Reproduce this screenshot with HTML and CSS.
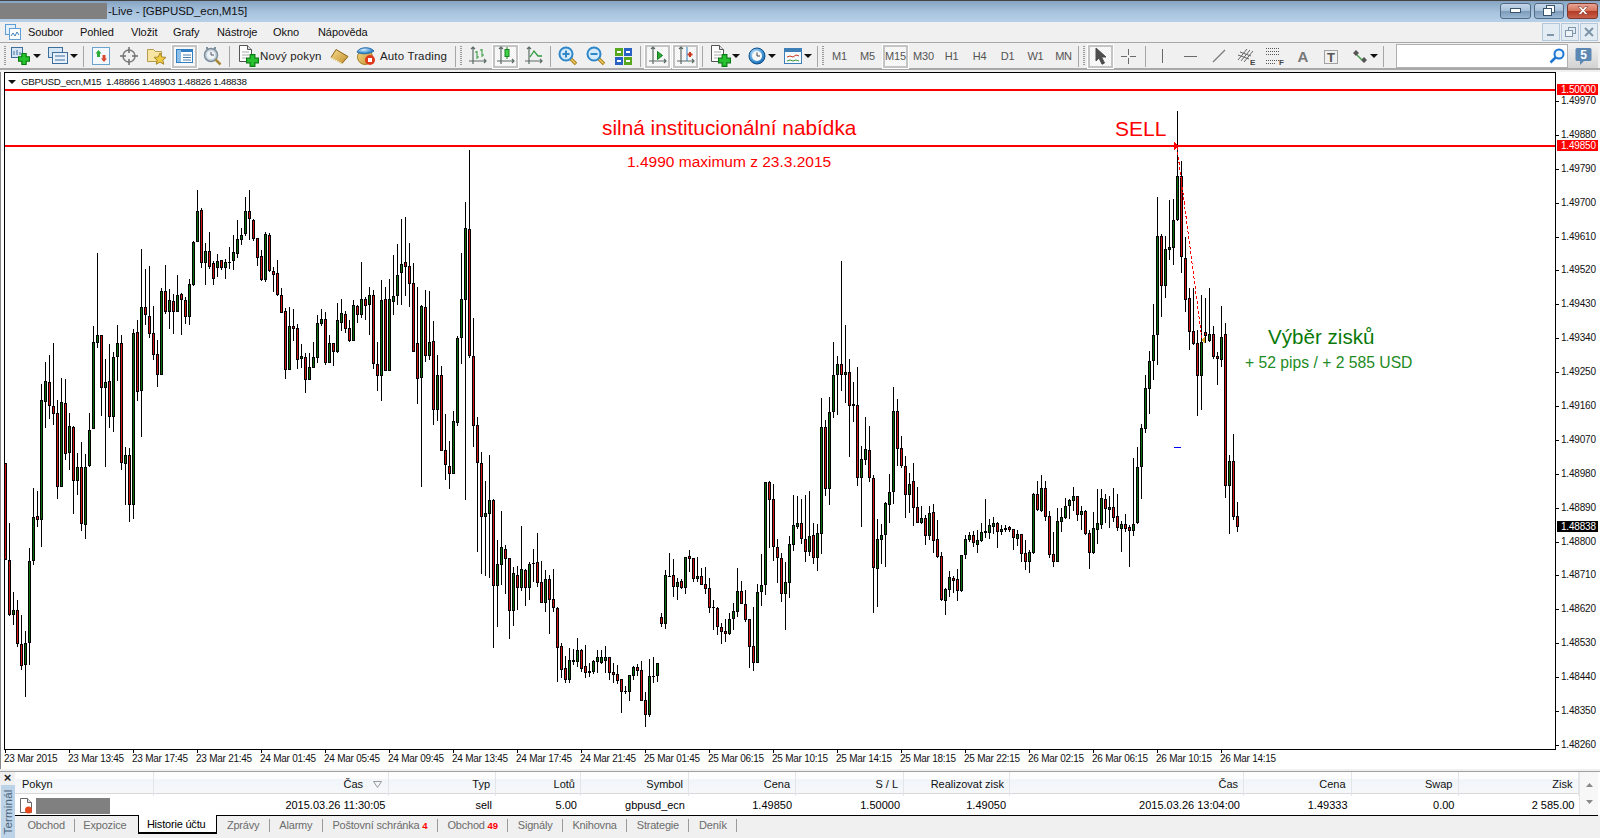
FILE: index.html
```html
<!DOCTYPE html>
<html lang="cs">
<head>
<meta charset="utf-8">
<title>GBPUSD_ecn,M15</title>
<link rel="stylesheet" href="styles.css">
</head>
<body>
<svg class="defs" width="0" height="0">
  <defs>
    <linearGradient id="gBlue" x1="0" y1="0" x2="0" y2="1"><stop offset="0" stop-color="#e8f2fb"/><stop offset="1" stop-color="#a9cbe8"/></linearGradient>
    <linearGradient id="gGold" x1="0" y1="0" x2="1" y2="1"><stop offset="0" stop-color="#f6dc8c"/><stop offset="1" stop-color="#c48f2c"/></linearGradient>
    <radialGradient id="gBall" cx=".4" cy=".35" r=".8"><stop offset="0" stop-color="#d9f0ff"/><stop offset=".6" stop-color="#3b8fd0"/><stop offset="1" stop-color="#0c4f94"/></radialGradient>
    <symbol id="plus" viewBox="0 0 11 11"><path d="M3.5.5h4v3h3v4h-3v3h-4v-3h-3v-4h3z" fill="#27c22d" stroke="#0a7a12"/></symbol>
    <symbol id="axes" viewBox="0 0 20 20"><path d="M5 1v17M1 15h17M3 3l2-2 2 2M16 13l2 2-2 2" fill="none" stroke="#5c6b66" stroke-width="1.2"/></symbol>
    <symbol id="doc" viewBox="0 0 15 18"><path d="M1.500 .5h8l4 4v12h-12z" fill="#fff" stroke="#555"/><path d="M9.500 .5v4h4" fill="#ddd" stroke="#555"/><path d="M4 7h7M4 10h7M4 13h4" stroke="#aaa"/></symbol>
    <symbol id="lens" viewBox="0 0 20 20"><path d="M12 12l6 6" stroke="#a87a14" stroke-width="3.400"/><path d="M12.500 12.500l5 5" stroke="#f2cf62" stroke-width="1.400"/><circle cx="8" cy="8" r="6.500" fill="#d5ebfb" stroke="#2e87c9" stroke-width="2"/></symbol>
  </defs>
</svg>

<header class="titlebar">
  <span class="redact redact-title"></span>
  <span class="title-text">-Live - [GBPUSD_ecn,M15]</span>
  <span class="winbtns">
    <span class="winbtn"><svg width="14" height="8"><rect x="1.500" y="1.500" width="10" height="4" fill="#fff" stroke="#39536b"/></svg></span>
    <span class="winbtn winbtn-mid"><svg width="14" height="11"><rect x="4.500" y=".5" width="8" height="7" fill="#fff" stroke="#39536b"/><rect x="1.500" y="3.500" width="8" height="7" fill="#fff" stroke="#39536b"/></svg></span>
    <span class="winbtn winbtn-close"><svg width="16" height="11"><path d="M3 1.500l3 0 2 2.500 2-2.500 3 0-3.500 4 3.500 4h-3l-2-2.500-2 2.500h-3l3.500-4z" fill="#fff" stroke="#7a2c20" stroke-width=".6"/></svg></span>
  </span>
</header>

<nav class="menubar">
  <svg class="appicon" width="16" height="16"><rect x=".5" y=".5" width="10" height="10" fill="#e4f0fb" stroke="#5f9fd6"/><rect x="4.500" y="4.500" width="11" height="11" fill="#fff" stroke="#5f9fd6"/><path d="M6 12l2-3 2 3 2-4 2 3" fill="none" stroke="#3f7fb8"/></svg>
  <span class="menuitem">Soubor</span><span class="menuitem">Pohled</span><span class="menuitem">Vložit</span><span class="menuitem">Grafy</span><span class="menuitem">Nástroje</span><span class="menuitem">Okno</span><span class="menuitem">Nápověda</span>
  <span class="mdibtns">
    <span class="mdibtn"><svg width="10" height="10"><rect x="1" y="7" width="7" height="2" fill="#7f95aa"/></svg></span>
    <span class="mdibtn"><svg width="11" height="11"><rect x="3.500" y=".5" width="7" height="6" fill="none" stroke="#7f95aa"/><rect x=".5" y="3.500" width="7" height="6" fill="#eef3f8" stroke="#7f95aa"/></svg></span>
    <span class="mdibtn"><svg width="10" height="10"><path d="M1 1l8 8M9 1l-8 8" stroke="#7f95aa" stroke-width="2"/></svg></span>
  </span>
</nav>

<div class="toolbar">
  <i class="grip"></i>
  <span class="tb tb-new"><svg width="19" height="18"><rect x=".5" y=".5" width="11" height="10" fill="#d6e6f5" stroke="#3d6f9c"/><path d="M3 8V4M6 8V3M9 8V5" stroke="#3d6f9c"/><use href="#plus" x="7" y="6" width="12" height="12"/></svg><i class="caret"></i></span>
  <span class="tb tb-prof"><svg width="20" height="18"><rect x=".5" y=".5" width="14" height="10" fill="#d6e6f5" stroke="#3d6f9c"/><rect x="4.500" y="5.500" width="15" height="11" fill="#e8f1fa" stroke="#3d6f9c"/><path d="M7 9h10M7 13h10" stroke="#3d6f9c"/></svg><i class="caret"></i></span>
  <i class="sep"></i>
  <span class="tb"><svg width="18" height="18"><rect x=".5" y=".5" width="17" height="17" fill="#f3f8fc" stroke="#6ba3cf"/><path d="M6.500 3l3 3.500H8V10H5V6.500H3.500z" fill="#2cab36"/><path d="M12 15l-3-3.500h1.500V8h3v3.500H15z" fill="#d9482f"/></svg></span>
  <span class="tb"><svg width="20" height="20"><circle cx="10" cy="10" r="6" fill="none" stroke="#7d7d7d" stroke-width="1.500"/><path d="M10 1v6M10 13v6M1 10h6M13 10h6" stroke="#6e6e6e" stroke-width="1.500"/></svg></span>
  <span class="tb"><svg width="21" height="20"><path d="M1.500 3.500h6l2 2h6v10h-14z" fill="#f7e6a2" stroke="#b59a4c"/><path d="M14 7l1.800 4 4.200.4-3.200 2.700 1 4.200-3.800-2.300-3.800 2.300 1-4.200-3.200-2.700 4.200-.4z" fill="#f0cb3e" stroke="#a8892a"/></svg></span>
  <span class="tb tb-on"><svg width="17" height="14"><rect x=".5" y=".5" width="16" height="13" fill="#fff" stroke="#2f7fc4"/><rect x="1" y="1" width="4" height="12" fill="#8cbde6"/><rect x="5" y="1" width="11" height="2" fill="#2f7fc4"/><path d="M7 6h8M7 8.500h8M7 11h8" stroke="#4a7fae"/></svg></span>
  <span class="tb"><svg width="20" height="20"><circle cx="8" cy="9" r="6.500" fill="#c9d4dc" stroke="#7b8d9b" stroke-width="1.500"/><circle cx="8" cy="9" r="4" fill="#eef3f6"/><path d="M8 6v3h3" fill="none" stroke="#556"/><path d="M4 1v2M12 1v2" stroke="#7b8d9b" stroke-width="2"/><path d="M12.500 13.500l5 5" stroke="#a88a3a" stroke-width="2.500"/></svg></span>
  <i class="sep"></i>
  <span class="tb tb-text tb-order"><svg width="21" height="22"><use href="#doc" x="0" y="0" width="15" height="18"/><use href="#plus" x="8" y="9" width="13" height="13"/></svg><b class="tb-label">Nový pokyn</b></span>
  <span class="tb"><svg width="19" height="15"><path d="M6 .5l12 7-6 7-11-6z" fill="url(#gGold)" stroke="#8a6418"/><path d="M1 8.500l11 6" stroke="#fff3c4"/></svg></span>
  <span class="tb tb-text tb-auto"><svg width="20" height="20"><circle cx="9" cy="11" r="7.500" fill="url(#gGold)" stroke="#a57e22"/><path d="M1 6c2-5 13-6 17-1-4 3-13 4-17 1z" fill="url(#gBall)" stroke="#2d6ea8"/><circle cx="14" cy="14" r="5" fill="#e03a1c"/><rect x="12" y="12" width="4" height="4" fill="#fff"/></svg><b class="tb-label">Auto Trading</b></span>
  <i class="sep"></i>
  <i class="grip"></i>
  <span class="tb"><svg width="20" height="20"><use href="#axes"/><path d="M9 5v8M7 6h2M9 11h2M14 3v8M12 4h2M14 9h2" stroke="#2e9a3a" fill="none"/></svg></span>
  <span class="tb tb-on"><svg width="20" height="20"><use href="#axes"/><path d="M11 1v12" stroke="#16861f"/><rect x="9" y="3.500" width="4" height="7" fill="#3ed049" stroke="#16861f"/></svg></span>
  <span class="tb"><svg width="20" height="20"><use href="#axes"/><path d="M6 11l4-6 4 5h4" fill="none" stroke="#2e9a3a" stroke-width="1.300"/></svg></span>
  <i class="sep"></i>
  <span class="tb"><svg width="20" height="20"><use href="#lens"/><path d="M8 4.500v7M4.500 8h7" stroke="#2e87c9" stroke-width="2"/></svg></span>
  <span class="tb"><svg width="20" height="20"><use href="#lens"/><path d="M4.500 8h7" stroke="#2e87c9" stroke-width="2"/></svg></span>
  <span class="tb"><svg width="17" height="17"><rect width="8" height="8" fill="#59a71e"/><rect x="9" width="8" height="8" fill="#2a62c4"/><rect y="9" width="8" height="8" fill="#2a62c4"/><rect x="9" y="9" width="8" height="8" fill="#59a71e"/><path d="M2 4h4M11 4h4M2 13h4M11 13h4" stroke="#fff" stroke-width="2"/></svg></span>
  <i class="sep"></i>
  <span class="tb tb-on"><svg width="20" height="20"><use href="#axes"/><path d="M9.500 5.500l5 4-5 4z" fill="#2cab36" stroke="#137a1d"/></svg></span>
  <span class="tb tb-on"><svg width="20" height="20"><use href="#axes"/><path d="M11 1v14" stroke="#2f7fc4"/><path d="M14 6v5M11.500 8.500h5" stroke="#c83a1e" stroke-width="2"/></svg></span>
  <i class="sep"></i>
  <span class="tb tb-ind"><svg width="21" height="22"><use href="#doc" x="0" y="0" width="15" height="18"/><use href="#plus" x="8" y="9" width="13" height="13"/></svg><i class="caret"></i></span>
  <span class="tb tb-clock"><svg width="18" height="18"><circle cx="9" cy="9" r="8" fill="url(#gBall)" stroke="#0b4f8f"/><circle cx="9" cy="9" r="5" fill="#f5f7f8"/><path d="M9 5.500V9h3" fill="none" stroke="#444"/></svg><i class="caret"></i></span>
  <span class="tb tb-tpl"><svg width="18" height="16"><rect x=".5" y=".5" width="17" height="15" fill="#f5f9fd" stroke="#3f7fb8"/><rect x="1" y="1" width="16" height="3" fill="#3f7fb8"/><path d="M3 9l3-1 3 1 3-2 3 1" fill="none" stroke="#c83a1e"/><path d="M3 13l3-1 3 1 3-1 3 1" fill="none" stroke="#3a9a3a"/></svg><i class="caret"></i></span>
  <i class="sep"></i>
  <i class="grip"></i>
  <span class="tb tf">M1</span><span class="tb tf">M5</span><span class="tb tf tb-on">M15</span><span class="tb tf">M30</span><span class="tb tf">H1</span><span class="tb tf">H4</span><span class="tb tf">D1</span><span class="tb tf">W1</span><span class="tb tf">MN</span>
  <i class="sep sep-tight"></i>
  <i class="grip"></i>
  <span class="tb tb-on"><svg width="14" height="18"><path d="M2 1l10 9H7.500l3 6-2.500 1.200-3-6.200L2 14z" fill="#4d4d4d" stroke="#4d4d4d"/></svg></span>
  <span class="tb"><svg width="17" height="17"><path d="M8.500 1v6M8.500 10v6M1 8.500h6M10 8.500h6" stroke="#6a6a6a"/></svg></span>
  <i class="sep"></i>
  <span class="tb"><svg width="3" height="14"><path d="M1.500 0v14" stroke="#6a6a6a"/></svg></span>
  <span class="tb"><svg width="13" height="3"><path d="M0 1.500h13" stroke="#6a6a6a"/></svg></span>
  <span class="tb"><svg width="14" height="14"><path d="M1 13L13 1" stroke="#7a7a7a" stroke-width="1.200"/></svg></span>
  <span class="tb"><svg width="20" height="21"><path d="M1 14L10 3M4 15L13 4M7 16L16 5M1 9l11 4M3 6l11 4" stroke="#666" fill="none"/><text class="ico-letter" x="13" y="19">E</text></svg></span>
  <span class="tb"><svg width="20" height="21"><path d="M1 2.500h14M1 5.500h14M1 8.500h14M1 14.500h14M1 17.500h10" stroke="#555" stroke-dasharray="1 1" fill="none"/><text class="ico-letter" x="14" y="19">F</text></svg></span>
  <span class="tb"><svg width="14" height="16"><text class="ico-a" x="7" y="14">A</text></svg></span>
  <span class="tb"><svg width="16" height="17"><rect x="1.500" y="2.500" width="13" height="13" fill="none" stroke="#555" stroke-dasharray="1 1"/><text class="ico-t" x="8" y="14">T</text></svg></span>
  <span class="tb tb-arrows"><svg width="16" height="15"><path d="M4 1l3 3-3 3-3-3zM12 8l3 3-3 3-3-3z" fill="#555"/><path d="M5 6l5 5" stroke="#4a9a4a" stroke-width="1.500"/></svg><i class="caret"></i></span>
  <i class="sep"></i>
  <div class="search">
    <span class="searchbox"><svg width="16" height="16"><circle cx="10" cy="6" r="4.500" fill="#eaf5ff" stroke="#1c76d2" stroke-width="2"/><path d="M6.500 9.500L1.500 14.500" stroke="#1c76d2" stroke-width="2.500"/></svg></span>
    <span class="notif"><svg width="17" height="19"><path d="M2 1h13a1.500 1.500 0 0 1 1.500 1.500v10a1.500 1.500 0 0 1-1.500 1.500H9l-4 4v-4H2A1.500 1.500 0 0 1 .5 12.500v-10A1.500 1.500 0 0 1 2 1z" fill="#5c88b3"/><text class="ico-five" x="8.500" y="12">5</text></svg></span>
  </div>
</div>

<main class="workspace">
  <div class="chart-col">
    <div class="chart" id="chart">
      <svg class="candles" id="candles" width="1550" height="675" viewBox="5 73 1550 675"></svg>
      <div class="chart-head"><i class="head-tri"></i><span>GBPUSD_ecn,M15&nbsp;&nbsp;1.48866 1.48903 1.48826 1.48838</span></div>
      <i class="hline hline-a"></i>
      <i class="hline hline-b"></i>
      <span class="note note-main">silná institucionální nabídka</span>
      <span class="note note-sub">1.4990 maximum z 23.3.2015</span>
      <span class="note note-sell">SELL</span>
      <span class="note note-gain">Výběr zisků</span>
      <span class="note note-pips">+ 52 pips / + 2 585 USD</span>
    </div>
    <div class="timeaxis">
      <span class="tl">23 Mar 2015</span><span class="tl">23 Mar 13:45</span><span class="tl">23 Mar 17:45</span><span class="tl">23 Mar 21:45</span><span class="tl">24 Mar 01:45</span><span class="tl">24 Mar 05:45</span><span class="tl">24 Mar 09:45</span><span class="tl">24 Mar 13:45</span><span class="tl">24 Mar 17:45</span><span class="tl">24 Mar 21:45</span><span class="tl">25 Mar 01:45</span><span class="tl">25 Mar 06:15</span><span class="tl">25 Mar 10:15</span><span class="tl">25 Mar 14:15</span><span class="tl">25 Mar 18:15</span><span class="tl">25 Mar 22:15</span><span class="tl">26 Mar 02:15</span><span class="tl">26 Mar 06:15</span><span class="tl">26 Mar 10:15</span><span class="tl">26 Mar 14:15</span>
    </div>
  </div>
  <div class="priceaxis">
    <span class="pl">1.49970</span><span class="pl">1.49880</span><span class="pl">1.49790</span><span class="pl">1.49700</span><span class="pl">1.49610</span><span class="pl">1.49520</span><span class="pl">1.49430</span><span class="pl">1.49340</span><span class="pl">1.49250</span><span class="pl">1.49160</span><span class="pl">1.49070</span><span class="pl">1.48980</span><span class="pl">1.48890</span><span class="pl">1.48800</span><span class="pl">1.48710</span><span class="pl">1.48620</span><span class="pl">1.48530</span><span class="pl">1.48440</span><span class="pl">1.48350</span><span class="pl">1.48260</span>
    <span class="flag flag-a">1.50000</span>
    <span class="flag flag-b">1.49850</span>
    <span class="flag flag-c">1.48838</span>
  </div>
</main>

<section class="terminal">
  <aside class="term-side">
    <b class="term-close">×</b>
    <span class="term-label"><span class="term-rot">Terminál</span></span>
  </aside>
  <div class="term-main">
    <div class="term-table">
      <div class="grid grid-head">
        <span class="th th-left">Pokyn</span>
        <span class="th th-sort">Čas <svg class="sorticon" width="9" height="7"><path d="M.5.5h8l-4 6z" fill="none" stroke="#999"/></svg></span>
        <span class="th">Typ</span><span class="th">Lotů</span><span class="th">Symbol</span><span class="th">Cena</span><span class="th">S / L</span><span class="th">Realizovat zisk</span><span class="th">Čas</span><span class="th">Cena</span><span class="th">Swap</span><span class="th">Zisk</span>
      </div>
      <div class="grid grid-row">
        <span class="td td-left"><svg width="14" height="16"><path d="M1.500 .5h7l4 4v10h-11z" fill="#fff" stroke="#666"/><path d="M8.500 .5v4h4" fill="#ddd" stroke="#666"/><circle cx="9.500" cy="12" r="3.500" fill="#e2481c"/></svg><span class="redact redact-row"></span></span>
        <span class="td td-time">2015.03.26 11:30:05</span>
        <span class="td">sell</span><span class="td">5.00</span><span class="td">gbpusd_ecn</span><span class="td">1.49850</span><span class="td">1.50000</span><span class="td">1.49050</span><span class="td">2015.03.26 13:04:00</span><span class="td">1.49333</span><span class="td">0.00</span><span class="td">2 585.00</span>
      </div>
      <div class="scrollcol"><svg width="7" height="4"><path d="M0 4l3.500-4 3.500 4z" fill="#8a8a8a"/></svg><svg width="7" height="4"><path d="M0 0l3.500 4 3.500-4z" fill="#8a8a8a"/></svg></div>
    </div>
    <div class="tabs">
      <span class="tab tab-first">Obchod</span>
      <span class="tab tab-pre">Expozice</span>
      <span class="tab tab-active">Historie účtu</span>
      <span class="tab">Zprávy</span>
      <span class="tab">Alarmy</span>
      <span class="tab">Poštovní schránka <b class="badge">4</b></span>
      <span class="tab">Obchod <b class="badge">49</b></span>
      <span class="tab">Signály</span>
      <span class="tab">Knihovna</span>
      <span class="tab">Strategie</span>
      <span class="tab">Deník</span>
      <i class="tabs-fill"></i>
    </div>
  </div>
</section>
<script src="chart.js"></script>
</body>
</html>
```
FILE: styles.css
```css
*{box-sizing:border-box}
html,body{margin:0;padding:0}
body{width:1600px;height:838px;overflow:hidden;background:#f0f0f0;font-family:"Liberation Sans",Arial,sans-serif;font-size:11px;color:#000;display:flex;flex-direction:column}
.defs{position:absolute}
i{font-style:normal;display:block}
svg{display:block;flex:none}

/* title */
.titlebar{height:22px;flex:none;display:flex;align-items:center;background:linear-gradient(#86a4c2,#a9c4df 55%,#b7d0e8);border-top:1px solid #444;padding-bottom:2px}
.redact{background:#808080;display:block}
.redact-title{width:107px;height:16px}
.title-text{font-size:11.500px;letter-spacing:-.06px;color:#111;margin-left:1px}
.winbtns{margin-left:auto;display:flex;gap:3px;padding-right:2px}
.winbtn{width:31px;height:16px;border:1px solid #4f6b86;border-radius:3px;background:linear-gradient(#c4d7ea,#a7c1da 48%,#7d9cba 52%,#9ab7d3);display:flex;align-items:center;justify-content:center}
.winbtn-mid{width:30px}
.winbtn-close{background:linear-gradient(#e8a494,#d4735c 48%,#b33a24 52%,#c9604a);border-color:#7a3a2e}

/* menu */
.menubar{height:20px;flex:none;display:flex;align-items:center;background:#f0f0f0;padding-left:5px;position:relative}
.appicon{margin-right:7px}
.menuitem{font-size:11px;letter-spacing:-.08px;color:#111}
.menuitem:nth-of-type(1){width:52px}
.menuitem:nth-of-type(2){width:51px}
.menuitem:nth-of-type(3){width:42px}
.menuitem:nth-of-type(4){width:44px}
.menuitem:nth-of-type(5){width:56px}
.menuitem:nth-of-type(6){width:45px}
.mdibtns{margin-left:auto;display:flex;gap:1px;padding-right:2px}
.mdibtn{width:18px;height:18px;border:1px solid #b3c8dc;background:#e3ebf3;display:flex;align-items:center;justify-content:center}

/* toolbar */
.toolbar{height:28px;flex:none;display:flex;align-items:center;gap:3px;background:#f0f0f0;border-top:1px solid #a8a8a8;border-bottom:2px solid #a8a8a8;padding:1px 0 0 4px}
.grip{width:2px;height:20px;background:repeating-linear-gradient(#9a9a9a 0 1px,transparent 1px 2px)}
.sep{width:1px;height:21px;background:#a6a6a6;margin:0 1px}
.sep-tight{margin-left:-1px}
.tb{width:25px;height:23px;flex:none;display:flex;align-items:center;justify-content:center;border:1px solid transparent}
.tb-on{border:2px solid #c4c4c4;background-color:#f8f8f8;background-image:repeating-conic-gradient(#fff 0 25%,#f0f0f0 0 50%);background-size:2px 2px;outline:1px solid #fff}
.tb-new{width:32px;gap:3px;justify-content:flex-start;padding-left:1px}
.tb-prof{width:35px;gap:2px;justify-content:flex-start;padding-left:3px}
.tb-order{width:90px;justify-content:flex-start;padding-left:3px;gap:1px}
.tb-auto{width:96px;justify-content:flex-start;gap:4px}
.tb-ind{width:35px;gap:1px;justify-content:flex-start;padding-left:2px}
.tb-clock{width:33px;gap:2px;justify-content:flex-start;padding-left:2px}
.tb-tpl{width:32px;gap:2px;justify-content:flex-start;padding-left:2px}
.tb-arrows{width:33px;gap:2px;justify-content:flex-start;padding-left:5px}
.tb-label{font-weight:400;font-size:11.500px;color:#222;white-space:nowrap;letter-spacing:.15px}
.caret{width:0;height:0;border:4px solid transparent;border-top:4px solid #111;border-bottom:0;flex:none}
.tf{font-size:11px;color:#555;letter-spacing:-.2px}
.search{margin-left:auto;margin-right:2px;display:flex;height:24px}
.searchbox{width:172px;height:24px;background:#fff;border:1px solid #b0b0b0;display:flex;align-items:center;justify-content:flex-end;padding-right:2px}
.notif{width:30px;height:24px;background:linear-gradient(#f2f2f2,#d2d2d2);display:flex;align-items:center;justify-content:center}
.ico-letter{font:700 8px "Liberation Sans",sans-serif;fill:#444}
.ico-a{font:700 15px "Liberation Sans",sans-serif;fill:#777;text-anchor:middle}
.ico-t{font:700 13px "Liberation Sans",sans-serif;fill:#555;text-anchor:middle}
.ico-five{font:700 12px "Liberation Sans",sans-serif;fill:#fff;text-anchor:middle}

/* workspace */
.workspace{flex:none;height:697px;display:flex;background:#fff;margin-top:2px;position:relative;border-left:1px solid #888;}
.chart-col{width:1555px;flex:none;padding-left:3px;background:#fff}
.chart{width:1552px;height:678px;border:1px solid #000;background:#fff;position:relative;overflow:hidden}
.candles{position:absolute;left:0;top:0;shape-rendering:crispEdges}
.chart-head{position:absolute;left:3px;top:2px;display:flex;align-items:center;gap:5px;font-size:9.800px;line-height:13px;letter-spacing:-.3px;color:#111;white-space:nowrap}
.head-tri{width:0;height:0;border:4px solid transparent;border-top:4px solid #111;border-bottom:0}
.hline{position:absolute;left:0;right:0;height:2px;background:#f00}
.hline-a{top:16px}
.hline-b{top:72px}
.note{position:absolute;white-space:nowrap;line-height:24px}
.note-main{left:597px;top:43px;font-size:20.800px;color:#f00}
.note-sub{left:622px;top:77px;font-size:15.500px;color:#f00}
.note-sell{left:1110px;top:44px;font-size:21px;color:#f00}
.note-gain{left:1263px;top:252px;font-size:20.600px;color:#0a7a0a}
.note-pips{left:1240px;top:278px;font-size:15.700px;color:#238b23}
.timeaxis{height:18px;display:flex;background:#fff}
.tl{width:64px;flex:none;font-size:10px;line-height:12px;letter-spacing:-.25px;color:#111;white-space:nowrap;margin-top:0}
.tl::before{content:"";display:block;width:1px;height:3px;background:#000;margin-left:1px}
.priceaxis{flex:1;display:flex;flex-direction:column;padding-top:12px;position:relative;background:#fff}
.pl{height:33.900px;line-height:33.900px;font-size:10px;letter-spacing:-.2px;color:#111;padding-left:5px;position:relative;flex:none}
.pl::before{content:"";position:absolute;left:0;top:50%;width:3px;height:1px;background:#000}
.flag{position:absolute;left:1px;width:41px;height:11px;line-height:11px;font-size:10px;letter-spacing:-.2px;color:#fff;padding-left:4px}
.flag-a{top:12px;background:#f00}
.flag-b{top:68px;background:#f00}
.flag-c{top:449px;background:#000}

/* terminal */
.terminal{flex:1;display:flex;border-top:1px solid #a0a0a0;margin-top:2px;min-height:0}
.term-side{width:15px;flex:none;display:flex;flex-direction:column}
.term-close{height:13px;line-height:12px;text-align:center;font-size:13px;color:#222}
.term-label{flex:1;margin-left:1px;background:#bcd3e8;display:flex;align-items:center;justify-content:center}
.term-rot{transform:rotate(-90deg);font-size:11.500px;color:#4e6478;white-space:nowrap;letter-spacing:.2px}
.term-main{flex:1;display:flex;flex-direction:column;min-width:0}
.term-table{height:43px;flex:none;background:#fff;display:grid;grid-template-columns:1564px 1fr;grid-template-rows:22px 21px;position:relative}
.grid{display:grid;grid-template-columns:139px 235px 107px 85px 108px 107px 108px 106px 234px 107.500px 107px 120px;grid-column:1}
.grid-head{background:linear-gradient(#fdfdfd 0 35%,#f1f5fa 35%,#f6f8fb);border-bottom:1px solid #d8d8d8}
.th{font-size:11px;line-height:24px;text-align:right;padding-right:5px;border-right:1px solid #e2e6ea;color:#111;white-space:nowrap;display:block}
.th-left{text-align:left;padding-left:7px}
.th-sort{padding-right:5px;display:flex;justify-content:flex-end;align-items:center;gap:10px}
.sorticon{margin-right:1px}
.td{font-size:11px;line-height:23px;text-align:right;padding-right:4px;color:#000;white-space:nowrap}
.td-left{display:flex;align-items:center;gap:3px;padding-left:4px;text-align:left}
.td-time{padding-right:3.500px}
.redact-row{width:74px;height:16px}
.scrollcol{grid-column:2;grid-row:1/3;display:flex;flex-direction:column;justify-content:space-around;align-items:center;padding:4px 0;background:#f7f7f7;border-left:1px solid #e5e5e5;margin-right:2px;width:19px}
.tabs{flex:1;display:flex;align-items:flex-start;font-size:11px;letter-spacing:-.2px;color:#6c6c6c;background:#f0f0f0;border-top:0}
.tab{height:19px;line-height:18px;padding:0 10.500px 0 9.500px;border-top:1px solid #000;white-space:nowrap;position:relative}
.tab:not(.tab-active):not(.tab-pre)::after{content:"";position:absolute;right:0;top:3px;height:13px;width:1px;background:#9a9a9a}
.tab-first{padding-left:12.500px}
.tab-pre{padding-right:11.500px;padding-left:8px}
.tab-active{color:#000;background:#fff;border:1px solid #000;border-width:0 1.500px 2px 1px;padding:0 11px 0 8px;height:19px;line-height:19px}
.tabs-fill{flex:1;height:1px;background:#000;margin-right:2px}
.badge{color:#f00;font-size:9.500px}
```
FILE: chart.js
```js
// Candles: [high, low, bodyTop, bodyBottom, colour], measured per section of the chart.
var sections = [
 {y0:180,s:2.99,c:[
[845,1137,845,1135,'r'],[1025,1305,1136,1300,'r'],[1232,1332,1287,1300,'g'],[1255,1397,1285,1388,'r'],[1300,1465,1387,1453,'r'],[1348,1547,1384,1451,'g'],[1100,1451,1139,1385,'g'],[921,1150,1008,1140,'g'],[930,1038,1005,1017,'r'],[610,1098,658,1017,'g'],[545,743,601,664,'g'],[523,716,604,677,'r'],[488,734,676,700,'r'],[658,953,697,919,'r'],[592,919,664,919,'g'],[595,836,667,820,'r'],[697,866,736,817,'g'],[736,998,739,901,'r'],[815,941,858,901,'g'],[784,1048,858,1030,'r'],[818,1072,858,1032,'g'],[697,859,748,856,'g'],[436,746,485,746,'g'],[218,502,463,487,'g'],[462,705,463,623,'r'],[535,857,604,623,'g'],[490,741,601,710,'r'],[515,753,530,710,'g'],[434,602,488,530,'g'],[463,866,488,847,'r'],[798,971,822,850,'g'],[800,1023,822,973,'r'],[446,1015,458,973,'g'],[418,662,455,635,'r'],[207,768,380,632,'g'],[266,433,380,405,'r'],[258,472,407,460,'r'],[377,538,458,522,'r'],[478,620,521,584,'r'],[322,584,333,584,'g'],[254,400,333,396,'r'],[326,445,359,396,'g'],[340,460,362,396,'r'],[284,396,344,396,'g'],[338,463,340,360,'r'],[350,431,359,411,'r'],[296,433,312,411,'g'],[183,316,186,314,'g'],[30,184,94,184,'g'],[84,263,91,247,'r'],[188,314,213,247,'g'],[155,265,213,260,'r'],[243,314,249,295,'r'],[222,290,243,263,'g'],[238,268,240,263,'r'],[237,296,246,263,'g'],[200,265,246,247,'g'],[165,268,216,241,'g'],[120,232,177,220,'g'],[144,194,165,178,'g'],[51,167,94,160,'g'],[30,178,94,118,'r']]},
 {y0:145,s:3,c:[
[222,287,226,281,'r'],[280,363,280,338,'r'],[316,408,334,404,'r'],[262,410,268,404,'g'],[265,381,271,378,'r'],[366,441,379,389,'r'],[346,452,385,449,'r'],[430,503,451,503,'r'],[490,702,499,674,'r'],[487,674,544,674,'g'],[492,588,544,551,'r'],[538,671,550,644,'r'],[598,669,634,641,'g'],[623,744,637,704,'r'],[625,704,667,704,'g'],[591,668,637,668,'g'],[511,654,535,638,'g'],[492,543,523,536,'g'],[502,660,523,653,'r'],[571,653,595,653,'g'],[595,663,595,620,'r'],[475,623,526,621,'g'],[463,558,505,533,'g'],[499,563,508,551,'r'],[526,590,550,587,'r'],[465,587,481,587,'g'],[481,534,484,509,'r'],[351,520,463,509,'g'],[457,525,463,482,'r'],[427,570,451,479,'g'],[435,672,451,656,'r'],[591,738,658,692,'r'],[405,768,466,692,'g'],[427,678,463,677,'r'],[403,678,463,677,'g'],[331,510,454,470,'g'],[297,481,391,452,'g'],[222,480,358,383,'g'],[216,453,352,365,'r'],[294,486,364,416,'r'],[354,620,415,620,'r'],[427,777,595,701,'r'],[481,1026,484,698,'g'],[435,650,487,632,'r'],[438,645,592,632,'g'],[528,840,589,794,'r'],[630,828,691,794,'g'],[664,917,691,917,'r'],[808,1005,916,959,'r'],[889,1032,964,986,'r'],[799,986,829,986,'g'],[574,842,580,833,'g'],[324,657,463,578,'g'],[171,1065,250,464,'g'],[15,640,253,634,'r'],[520,906,634,842,'r'],[817,1221,841,953,'r'],[922,1287,955,1115,'r'],[1008,1293,1105,1115,'g'],[931,1299,1066,1106,'g'],[1063,1509,1066,1322,'r'],[1186,1446,1258,1322,'g']]},
 {y0:450,s:3,c:[
[184,405,292,345,'g'],[286,432,298,326,'r'],[325,567,325,482,'r'],[351,528,370,482,'g'],[349,480,376,413,'r'],[229,423,358,413,'g'],[358,468,361,413,'r'],[337,450,343,413,'g'],[298,397,340,341,'g'],[250,410,337,398,'r'],[334,458,397,458,'r'],[361,486,388,458,'g'],[376,552,388,449,'r'],[358,486,448,473,'r'],[472,696,475,593,'r'],[579,684,589,659,'r'],[618,699,655,689,'r'],[595,699,631,689,'g'],[596,644,631,636,'g'],[565,652,601,635,'g'],[597,666,601,656,'r'],[586,684,649,668,'r'],[640,681,664,668,'r'],[630,672,634,665,'g'],[601,669,622,635,'g'],[601,642,622,638,'g'],[589,668,622,632,'g'],[622,690,622,668,'r'],[640,699,667,674,'r'],[646,702,673,692,'r'],[688,789,688,725,'r'],[709,732,724,725,'g'],[676,753,676,725,'g'],[649,689,652,677,'g'],[643,678,652,662,'r'],[634,752,661,752,'r'],[727,831,751,794,'r'],[628,801,679,794,'g'],[621,699,677,680,'g'],[640,696,640,677,'g'],[490,530,502,521,'r'],[361,537,376,521,'g'],[310,382,377,378,'g'],[328,441,376,410,'r'],[385,450,397,410,'g'],[388,416,394,413,'r'],[322,431,322,413,'g'],[301,366,319,326,'r'],[325,395,325,386,'r'],[322,395,379,386,'g'],[353,406,379,404,'r'],[352,431,403,416,'r'],[385,488,415,473,'r'],[451,540,472,473,'g'],[471,555,473,530,'r'],[518,581,532,545,'r'],[508,575,544,551,'r'],[490,556,508,551,'g'],[459,540,484,506,'g'],[354,500,424,485,'g'],[394,463,424,463,'r'],[420,515,463,511,'r'],[508,654,508,590,'r'],[472,663,589,638,'r'],[403,638,427,638,'g'],[312,468,406,425,'g'],[97,434,97,406,'g'],[94,295,97,149,'r'],[103,332,148,292,'r'],[268,399,292,325,'r']]},
 {y0:250,s:3,c:[
[910,1056,925,1031,'r'],[937,1140,997,1031,'g'],[859,1044,883,998,'g'],[736,902,826,884,'g'],[738,837,820,831,'g'],[748,881,820,868,'r'],[736,935,868,905,'r'],[724,917,859,905,'g'],[820,941,856,923,'r'],[823,962,850,923,'g'],[445,911,532,851,'g'],[511,738,532,716,'r'],[442,765,487,716,'g'],[277,503,376,485,'g'],[319,495,343,376,'g'],[34,423,343,376,'r'],[226,458,367,376,'g'],[328,621,367,467,'r'],[397,515,463,467,'r'],[352,708,466,683,'r'],[589,830,628,683,'g'],[502,644,598,629,'g'],[529,695,601,683,'r'],[676,1088,685,953,'r'],[808,1070,868,956,'g'],[823,941,856,869,'g'],[757,951,760,854,'g'],[673,818,727,764,'g'],[412,761,484,727,'g'],[448,647,484,596,'r'],[559,653,595,647,'r'],[619,803,649,734,'r'],[670,789,703,734,'g'],[640,827,694,773,'r'],[712,818,772,818,'r'],[769,822,805,818,'g'],[796,884,805,857,'r'],[769,869,790,857,'g'],[763,908,787,872,'r'],[811,923,868,920,'r'],[907,1052,919,1049,'r'],[1015,1094,1018,1052,'g'],[964,1040,982,1019,'g'],[979,1028,985,992,'r'],[958,1052,988,1022,'r'],[916,1025,916,1022,'g'],[856,927,868,914,'g'],[847,875,856,870,'g'],[844,890,856,878,'r'],[841,908,871,884,'g'],[820,875,847,872,'g'],[748,863,844,848,'g'],[808,866,826,850,'g'],[802,851,820,830,'g'],[817,893,820,845,'r'],[826,854,838,845,'g'],[826,845,835,839,'g'],[829,845,832,839,'r'],[838,899,838,863,'r'],[841,887,853,866,'g'],[853,935,853,911,'r'],[871,959,910,935,'r'],[899,968,907,935,'g']]},
 {y0:180,s:3,c:[
[940,1121,943,1118,'g'],[904,992,943,989,'r'],[886,995,925,992,'g'],[904,1022,925,1010,'r'],[994,1133,1009,1124,'r'],[1057,1160,1123,1145,'r'],[985,1145,1024,1145,'g'],[985,1056,1012,1025,'g'],[955,1016,979,1013,'g'],[958,1016,961,979,'g'],[922,992,949,962,'g'],[949,1023,949,1004,'r'],[979,1050,994,1004,'g'],[991,1065,994,1061,'r'],[1049,1167,1060,1118,'r'],[997,1121,1045,1118,'g'],[927,1092,1030,1049,'g'],[928,1047,955,1034,'g'],[943,1029,958,986,'r'],[949,1044,982,989,'g'],[925,1025,982,1014,'r'],[943,1052,1009,1043,'r'],[1024,1116,1033,1046,'g'],[1003,1055,1033,1046,'r'],[1036,1161,1042,1052,'r'],[835,1068,1033,1052,'g'],[802,1033,862,1028,'g'],[733,957,745,860,'g'],[586,760,625,746,'g'],[514,702,544,626,'g'],[373,600,466,544,'g'],[52,555,169,466,'g'],[163,411,169,317,'r'],[169,354,208,317,'g'],[61,240,202,209,'g'],[57,255,121,203,'g']]},
 {y0:100,s:3,c:[[34,362,229,361,'g'],[184,518,229,472,'r']]},
 {y0:180,s:3,c:[
[172,396,235,359,'r'],[325,510,355,455,'r'],[325,495,454,492,'r'],[451,708,489,587,'r'],[346,690,487,587,'g'],[355,489,457,467,'r'],[325,486,463,483,'g'],[439,537,463,530,'r'],[517,615,529,537,'r'],[379,561,472,540,'g'],[430,954,463,917,'r'],[826,1062,844,917,'g'],[763,1020,844,1010,'r'],[967,1056,1009,1040,'r']]}
];
var NS = 'http://www.w3.org/2000/svg';
var svg = document.getElementById('candles');
function rect(x, y, w, h, fill) {
  var r = document.createElementNS(NS, 'rect');
  r.setAttribute('x', x); r.setAttribute('y', y);
  r.setAttribute('width', w); r.setAttribute('height', h);
  r.setAttribute('fill', fill);
  svg.appendChild(r);
}
var n = 0;
sections.forEach(function (sec) {
  sec.c.forEach(function (d) {
    var x = 5 + 4 * n++;
    var y = function (v) { return Math.round(sec.y0 + v / sec.s); };
    var hi = y(d[0]), lo = y(d[1]), t = y(d[2]), b = Math.max(y(d[3]), t + 1);
    rect(x, hi, 1, lo - hi, '#000');
    rect(x - 1, t, 3, b - t, '#000');
    if (b - t > 2) rect(x, t + 1, 1, b - t - 2, d[4] === 'g' ? '#0a6e0a' : '#d01414');
  });
});
// trade markers
var line = document.createElementNS(NS, 'line');
line.setAttribute('x1', 1177); line.setAttribute('y1', 147);
line.setAttribute('x2', 1202); line.setAttribute('y2', 340);
line.setAttribute('stroke', '#f00'); line.setAttribute('stroke-dasharray', '3 2');
svg.appendChild(line);
function poly(points, fill) {
  var p = document.createElementNS(NS, 'polygon');
  p.setAttribute('points', points); p.setAttribute('fill', fill);
  svg.appendChild(p);
}
poly('1174,142 1179,146 1174,150', '#f00');
poly('1201,340 1205,336 1205,344', '#daa520');
rect(1174, 447, 7, 1, '#00f');
```
